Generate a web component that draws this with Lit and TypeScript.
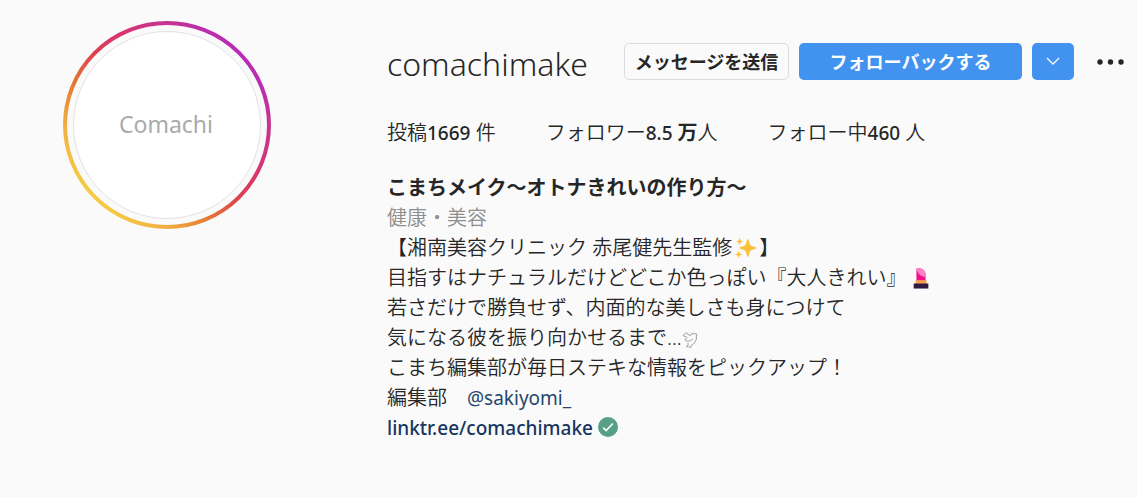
import { LitElement, html, css, svg } from "lit";
import { customElement } from "lit/decorators.js";

const sparkles = html`<svg class="emoji sparkles" viewBox="0 0 24 24" role="img" aria-label="✨">
  <g fill="#fcc13b">
    <path d="M14 3.500c.8 6 2.300 7.700 8 8.500-5.700.8-7.200 2.500-8 8.500-.8-6-2.300-7.700-8-8.500 5.700-.8 7.200-2.500 8-8.500z" stroke="#fcc13b" stroke-width="2" stroke-linejoin="round" />
    <path d="M5 1.500c.3 2.300.9 3.200 3.200 3.500C5.900 5.300 5.300 6.200 5 8.500 4.700 6.200 4.100 5.300 1.800 5 4.100 4.700 4.700 3.800 5 1.500z" stroke="#fcc13b" stroke-width=".8" />
    <path d="M4 15.500c.3 2.300.9 3.200 3.200 3.500-2.300.3-2.900 1.200-3.200 3.500-.3-2.300-.9-3.200-3.200-3.500 2.300-.3 2.900-1.200 3.200-3.500z" stroke="#fcc13b" stroke-width=".8" />
  </g>
</svg>`;

const lipstick = html`<svg class="emoji lipstick" viewBox="0 0 24 24" role="img" aria-label="💄">
  <path d="M7 15V2c4-1.500 8 0 10 5v8z" fill="#f40f8c" />
  <path d="M7 2c4-1.500 8 0 10 5v4C12 10.500 8.500 8 7 2z" fill="#ff7fc6" />
  <path d="M6 14.500h12V19H6z" fill="#f7a14b" />
  <path d="M4 18h16v5.500H4z" fill="#321b41" />
</svg>`;

const dove = html`<svg class="dove" viewBox="0 0 16 18" role="img" aria-label="🕊">
  <path d="M1 4.500 2.400 3C3.500 1.500 6 1.800 6.500 4L9 4.300 10 2.500 14.800 3 14.300 6 14.500 8 13.200 10.500C12.500 12.500 11 13.500 9.500 14L8.500 16.800 6.500 15.500 4.300 15.800 6.500 13 5.500 12M1 4.500 3 5.500C5 5.500 5.500 7 4 8L2.800 8.500C3.500 10.500 6.500 11 8.500 9.500L11 8" fill="none" stroke="#8a8a8a" stroke-width=".8" stroke-linejoin="round" />
</svg>`;

const check = html`<svg class="check" viewBox="0 0 20 20" role="img" aria-label="✅">
  <circle cx="10" cy="10" r="10" fill="#56a086" />
  <path d="m5.200 10.600 3 3L14.800 6.500" fill="none" stroke="#fff" stroke-width="1.600" />
</svg>`;

@customElement("profile-avatar")
class ProfileAvatar extends LitElement {
  static styles = css`
    :host { display: block; }
    .avatar { display: grid; width: 208px; height: 208px; }
    .ring, .photo { grid-area: 1 / 1; }
    .ring { width: 100%; height: 100%; }
    .photo {
      box-sizing: border-box;
      place-self: center;
      display: grid;
      place-items: center;
      width: 188px;
      height: 188px;
      padding: 0 2px 2px 0;
      border: 1px solid #e2e2e4;
      border-radius: 50%;
      background: #fff;
      color: #aaa;
      font: 23px/32px "Noto Sans", sans-serif;
    }
  `;

  render() {
    return html`<div class="avatar">
      <svg class="ring" viewBox="0 0 208 208" aria-hidden="true">
        ${svg`<defs>
          <linearGradient id="story" x1="0" y1="1" x2="1" y2="0">
            <stop offset="0.140" stop-color="#f5cc45" />
            <stop offset="0.250" stop-color="#f0ad43" />
            <stop offset="0.370" stop-color="#e67a35" />
            <stop offset="0.500" stop-color="#dd4050" />
            <stop offset="0.600" stop-color="#da3470" />
            <stop offset="0.740" stop-color="#c8348f" />
            <stop offset="0.850" stop-color="#b92cb5" />
          </linearGradient>
        </defs>
        <circle cx="104" cy="104" r="102" fill="none" stroke="url(#story)" stroke-width="4" />`}
      </svg>
      <span class="photo">Comachi</span>
    </div>`;
  }
}

@customElement("app-root")
class AppRoot extends LitElement {
  static styles = css`
    :host {
      display: block;
      min-height: 100vh;
      background: #fafafa;
      color: #262626;
      font: 350 20px/30px "Noto Sans", "Noto Sans CJK JP", sans-serif;
    }
    .profile {
      display: grid;
      grid-template-columns: 324px 1fr;
      padding: 21px 13px 48px 63px;
    }
    .top {
      display: flex;
      align-items: center;
      height: 37px;
      margin-top: 22px;
    }
    h1, h2, p, ul { margin: 0; padding: 0; }
    .name { flex: 0 0 237px; font: 300 32px/37px "Noto Sans", sans-serif; padding-top: 4px; }
    button {
      box-sizing: border-box;
      height: 37px;
      padding: 0 0 2px;
      border: 0;
      border-radius: 5px;
      font: 700 18px/24px "Noto Sans CJK JP", sans-serif;
      cursor: pointer;
    }
    .message { width: 165px; border: 1px solid #dbdbdb; background: transparent; color: #262626; }
    .follow, .more { background: #4292ef; color: #fff; }
    .follow { width: 223px; margin-left: 10px; }
    .more { display: grid; place-items: center; width: 42px; margin-left: 10px; }
    .more svg { width: 14px; height: 8px; }
    .options { display: grid; place-items: center; padding: 0; background: transparent; margin-left: auto; }
    .options svg { width: 27px; height: 6px; }
    .stats {
      display: flex;
      flex-wrap: wrap;
      gap: 0 50px;
      margin-top: 38px;
      list-style: none;
    }
    .stats b { font-size: 19px; font-weight: 500; }
    .stats .unit { font-size: 20px; font-weight: 700; }
    .bio { margin-top: 25px; }
    .title { font-size: 20px; line-height: 30px; font-weight: 700; }
    .category { color: #8e8e8e; }
    .emoji { width: 22px; height: 22px; vertical-align: -4px; }
    .sparkles { margin: 0 2px 0 3px; }
    .lipstick { margin-left: 4px; }
    .dove { width: 16px; height: 18px; vertical-align: -4px; }
    .check { width: 20px; height: 20px; vertical-align: -2px; }
    a { color: #00376b; text-decoration: none; font-size: 19px; }
    .mention { color: #24466e; font-weight: 400; }
    .site { color: #17355f; font-weight: 500; }
  `;

  render() {
    return html`<main class="profile">
      <profile-avatar></profile-avatar>
      <section>
        <div class="top">
          <h1 class="name">comachimake</h1>
          <button class="message">メッセージを送信</button>
          <button class="follow">フォローバックする</button>
          <button class="more" aria-label="その他のアカウント">
            <svg viewBox="0 0 14 8" aria-hidden="true"><path d="m1 1 6 6 6-6" fill="none" stroke="#fff" stroke-width="1.300" /></svg>
          </button>
          <button class="options" aria-label="オプション">
            <svg viewBox="0 0 27 6" fill="#262626" aria-hidden="true"><circle cx="3" cy="3" r="2.700" /><circle cx="13.500" cy="3" r="2.700" /><circle cx="24" cy="3" r="2.700" /></svg>
          </button>
        </div>
        <ul class="stats">
          <li>投稿<b>1669</b> 件</li>
          <li>フォロワー<b>8.5 <span class="unit">万</span></b>人</li>
          <li>フォロー中<b>460</b> 人</li>
        </ul>
        <div class="bio">
          <h2 class="title">こまちメイク〜オトナきれいの作り方〜</h2>
          <p class="category">健康・美容</p>
          <p>【湘南美容クリニック 赤尾健先生監修${sparkles}】</p>
          <p>目指すはナチュラルだけどどこか色っぽい『大人きれい』${lipstick}</p>
          <p>若さだけで勝負せず、内面的な美しさも身につけて</p>
          <p>気になる彼を振り向かせるまで...${dove}</p>
          <p>こまち編集部が毎日ステキな情報をピックアップ！</p>
          <p>編集部　<a class="mention" href="#sakiyomi_">@sakiyomi_</a></p>
          <p><a class="site" href="#linktree">linktr.ee/comachimake</a> ${check}</p>
        </div>
      </section>
    </main>`;
  }
}
